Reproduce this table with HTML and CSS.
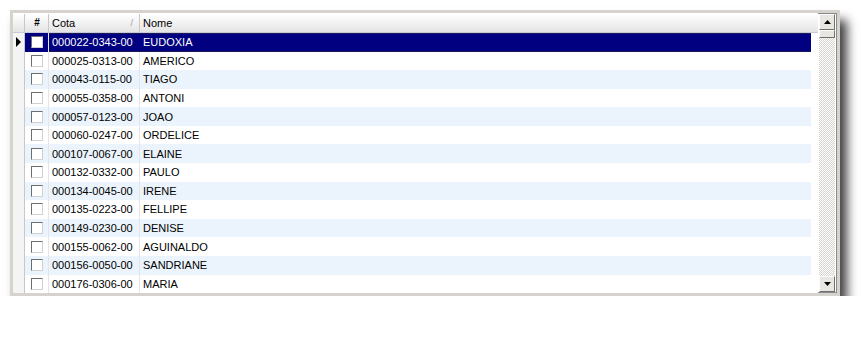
FILE: index.html
```html
<!DOCTYPE html>
<html>
<head>
<meta charset="utf-8">
<link rel="stylesheet" href="styles.css">
</head>
<body>
<div class="page">
  <div class="frame">
    <div class="grid">
      <div class="row head">
        <div class="c ind"></div>
        <div class="c num">#</div>
        <div class="c cota"><span>Cota</span><span class="sort">/</span></div>
        <div class="c nome">Nome</div>
      </div>
      <div class="row sel">
        <div class="c ind"><span class="tri"></span></div>
        <div class="c num"><span class="chk"></span></div>
        <div class="c cota">000022-0343-00</div>
        <div class="c nome">EUDOXIA</div>
      </div>
      <div class="row"><div class="c ind"></div><div class="c num"><span class="chk"></span></div><div class="c cota">000025-0313-00</div><div class="c nome">AMERICO</div></div>
      <div class="row alt"><div class="c ind"></div><div class="c num"><span class="chk"></span></div><div class="c cota">000043-0115-00</div><div class="c nome">TIAGO</div></div>
      <div class="row"><div class="c ind"></div><div class="c num"><span class="chk"></span></div><div class="c cota">000055-0358-00</div><div class="c nome">ANTONI</div></div>
      <div class="row alt"><div class="c ind"></div><div class="c num"><span class="chk"></span></div><div class="c cota">000057-0123-00</div><div class="c nome">JOAO</div></div>
      <div class="row"><div class="c ind"></div><div class="c num"><span class="chk"></span></div><div class="c cota">000060-0247-00</div><div class="c nome">ORDELICE</div></div>
      <div class="row alt"><div class="c ind"></div><div class="c num"><span class="chk"></span></div><div class="c cota">000107-0067-00</div><div class="c nome">ELAINE</div></div>
      <div class="row"><div class="c ind"></div><div class="c num"><span class="chk"></span></div><div class="c cota">000132-0332-00</div><div class="c nome">PAULO</div></div>
      <div class="row alt"><div class="c ind"></div><div class="c num"><span class="chk"></span></div><div class="c cota">000134-0045-00</div><div class="c nome">IRENE</div></div>
      <div class="row"><div class="c ind"></div><div class="c num"><span class="chk"></span></div><div class="c cota">000135-0223-00</div><div class="c nome">FELLIPE</div></div>
      <div class="row alt"><div class="c ind"></div><div class="c num"><span class="chk"></span></div><div class="c cota">000149-0230-00</div><div class="c nome">DENISE</div></div>
      <div class="row"><div class="c ind"></div><div class="c num"><span class="chk"></span></div><div class="c cota">000155-0062-00</div><div class="c nome">AGUINALDO</div></div>
      <div class="row alt"><div class="c ind"></div><div class="c num"><span class="chk"></span></div><div class="c cota">000156-0050-00</div><div class="c nome">SANDRIANE</div></div>
      <div class="row"><div class="c ind"></div><div class="c num"><span class="chk"></span></div><div class="c cota">000176-0306-00</div><div class="c nome">MARIA</div></div>
    </div>
    <div class="vscroll">
      <div class="btn"><svg width="7" height="4" viewBox="0 0 7 4"><path d="M3.5 0 L7 4 L0 4 Z" fill="#000"/></svg></div>
      <div class="thumb"></div>
      <div class="track"></div>
      <div class="btn"><svg width="7" height="4" viewBox="0 0 7 4"><path d="M0 0 L7 0 L3.5 4 Z" fill="#000"/></svg></div>
    </div>
  </div>
</div>
</body>
</html>
```
FILE: styles.css
```css
html, body {
  margin: 0;
  padding: 0;
  background: #ffffff;
}
.page {
  padding: 10px 0 0 10px;
  font-family: "Liberation Sans", Arial, sans-serif;
  font-size: 11px;
  color: #000;
}
.frame {
  width: 824px;
  height: 280px;
  border: 3px solid #d6d3ce;
  box-shadow: inset 0 0 0 1px #8a8a8a, 7px 10px 10px rgba(0,0,0,0.75);
  background: #fff;
  display: flex;
  padding: 0;
  box-sizing: content-box;
}
.grid {
  flex: 1;
  display: flex;
  flex-direction: column;
  padding: 1px 0 0 0;
  background: #fff;
}
.row {
  display: flex;
  height: 18.6px;
  align-items: stretch;
}
.row.head {
  height: 19px;
  background: linear-gradient(#ffffff, #e4e4e4);
  border-bottom: 1px solid #c9c9d8;
  box-sizing: border-box;
}
.c {
  display: flex;
  align-items: center;
  white-space: nowrap;
  box-sizing: border-box;
}
.ind {
  width: 12px;
  justify-content: center;
  background: #f4f4f4;
  border-right: 1px solid #c8c8c8;
}
.row.head .ind {
  background: transparent;
}
.num {
  width: 24px;
  justify-content: center;
  border-right: 1px solid #e4e4ea;
}
.row.head .num {
  font-weight: bold;
  font-size: 10px;
  padding-left: 1px;
  border-right: 1px solid #c8c8c8;
}
.cota {
  width: 91px;
  padding-left: 3px;
  border-right: 1px solid #e4e4ea;
}
.row.head .cota {
  justify-content: space-between;
  padding-right: 6px;
  border-right: 1px solid #c8c8c8;
}
.sort {
  color: #9a9a9a;
  font-size: 9px;
}
.nome {
  width: 671px;
  padding-left: 3px;
}
.row.alt .nome, .row.alt .cota, .row.alt .num {
  background: #ebf4fc;
}
.row.sel .cota, .row.sel .nome {
  background: #000080;
  color: #fff;
  border-top: 1px solid #1a1a5a;
  border-bottom: 1px solid #1a1a5a;
}
.row.sel .num {
  background: #000080;
}
.row.sel .cota {
  border-right: 1px solid #000080;
}
.tri {
  width: 0;
  height: 0;
  border-top: 5px solid transparent;
  border-bottom: 5px solid transparent;
  border-left: 5px solid #000;
}
.chk {
  width: 12px;
  height: 12px;
  box-sizing: border-box;
  background: #fff;
  border-top: 1px solid #6e6e6e;
  border-left: 1px solid #6e6e6e;
  border-right: 1px solid #d0d0d0;
  border-bottom: 1px solid #d0d0d0;
}
.vscroll {
  width: 16px;
  margin: 1px 2px 1px 1px;
  display: flex;
  flex-direction: column;
  background-color: #f4f3ef;
  background-image: repeating-conic-gradient(#ffffff 0 25%, #d6d3ce 0 50%);
  background-size: 2px 2px;
}
.btn {
  height: 16px;
  box-sizing: border-box;
  background: #e8e6e1;
  border-top: 1px solid #fbfbfb;
  border-left: 1px solid #fbfbfb;
  border-right: 1px solid #6f6f6f;
  border-bottom: 1px solid #6f6f6f;
  display: flex;
  align-items: center;
  justify-content: center;
}
.thumb {
  height: 8px;
  box-sizing: border-box;
  background: #e8e6e1;
  border-top: 1px solid #fbfbfb;
  border-left: 1px solid #fbfbfb;
  border-right: 1px solid #6f6f6f;
  border-bottom: 1px solid #6f6f6f;
}
.track {
  flex: 1;
}
```
